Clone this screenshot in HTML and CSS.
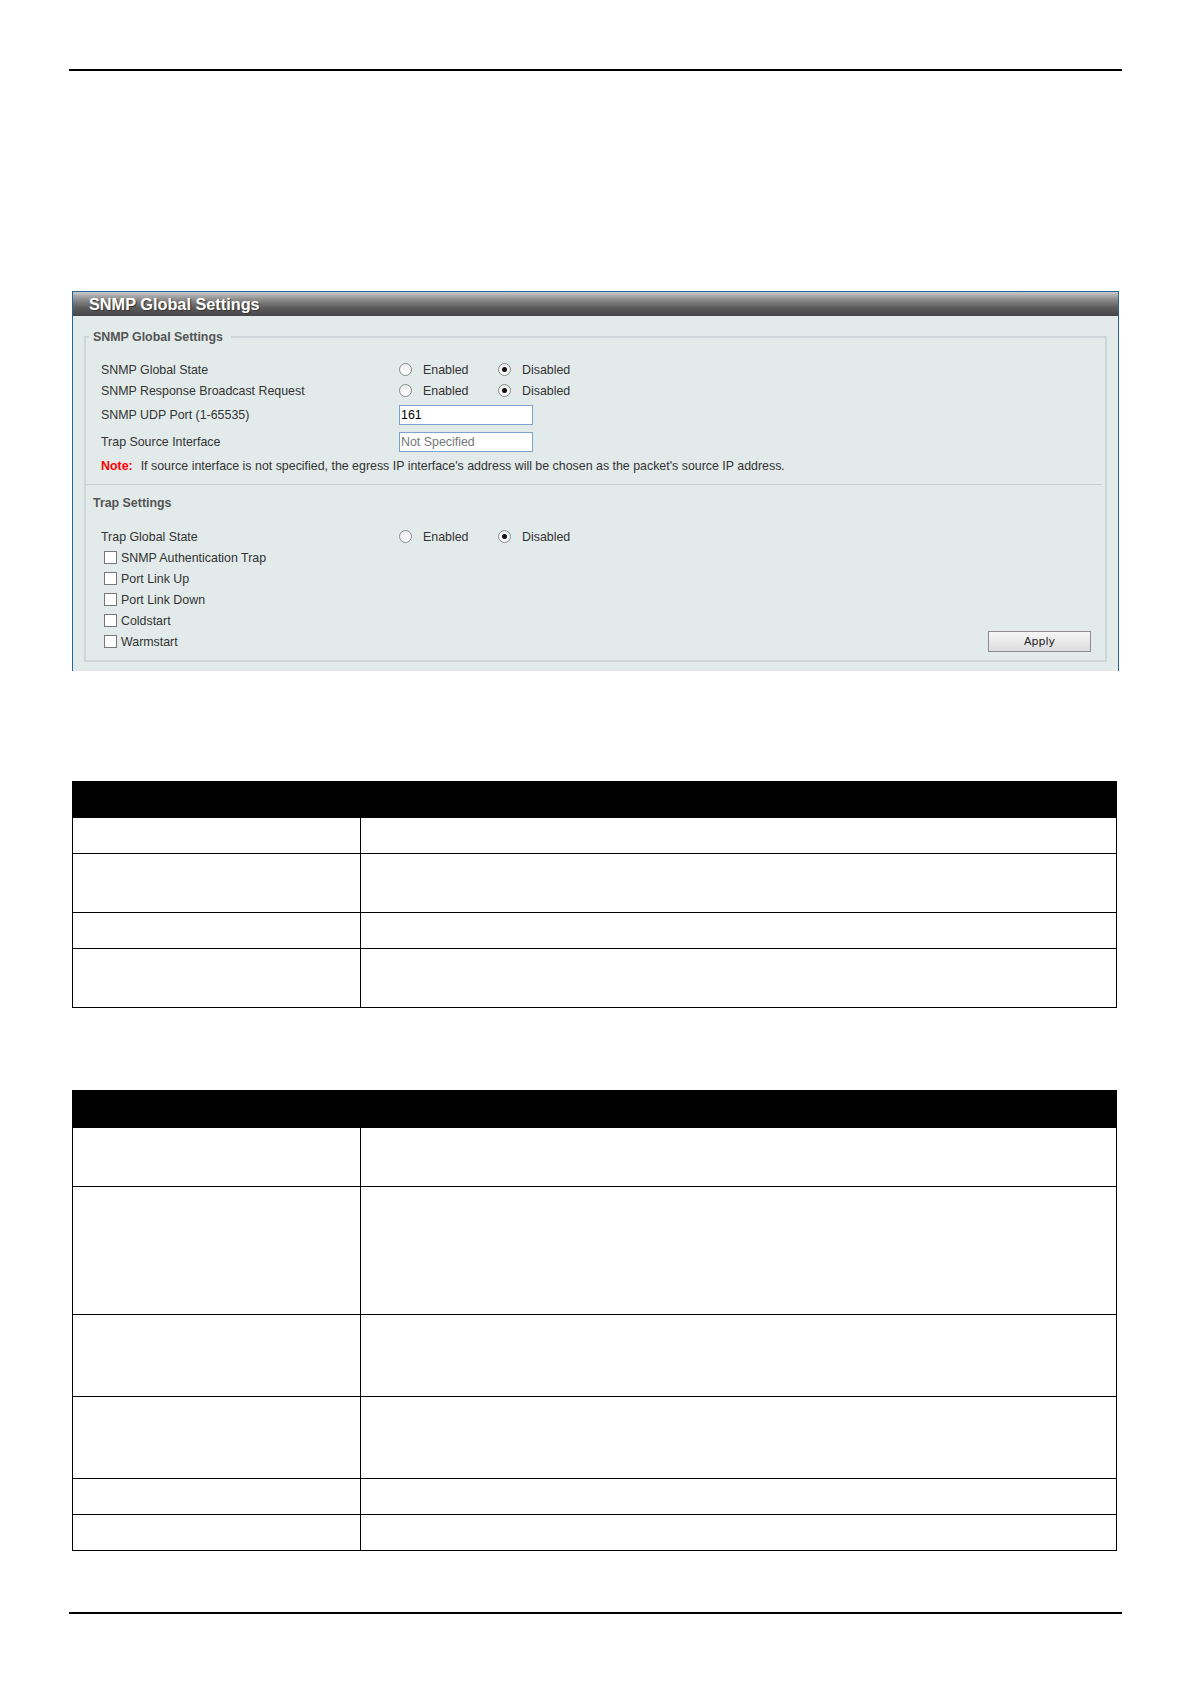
FILE: index.html
```html
<!DOCTYPE html>
<html lang="en">
<head>
    <meta charset="UTF-8">
    <meta name="viewport" content="width=device-width, initial-scale=1.0">
    <title>SNMP Global Settings</title>
    <link rel="stylesheet" href="styles.css">
</head>
<body>
    <div class="page">
        <div class="rule"></div>

        <div class="panel">
            <div class="panel-head">SNMP Global Settings</div>
            <div class="panel-body">
                <fieldset class="group">
                    <legend>SNMP Global Settings</legend>
                    <div class="fields">
                        <div class="row">
                            <span class="label">SNMP Global State</span>
                            <span class="opt"><span class="radio"></span>Enabled</span>
                            <span class="opt"><span class="radio on"></span>Disabled</span>
                        </div>
                        <div class="row">
                            <span class="label">SNMP Response Broadcast Request</span>
                            <span class="opt"><span class="radio"></span>Enabled</span>
                            <span class="opt"><span class="radio on"></span>Disabled</span>
                        </div>
                        <div class="row input-row">
                            <span class="label">SNMP UDP Port (1-65535)</span>
                            <input class="text-input" type="text" value="161">
                        </div>
                        <div class="row input-row">
                            <span class="label">Trap Source Interface</span>
                            <input class="text-input" type="text" placeholder="Not Specified">
                        </div>
                        <div class="row note">
                            <b>Note:</b>If source interface is not specified, the egress IP interface's address will be chosen as the packet's source IP address.
                        </div>

                        <div class="sep"></div>
                        <div class="sub-head">Trap Settings</div>

                        <div class="row trap-state">
                            <span class="label">Trap Global State</span>
                            <span class="opt"><span class="radio"></span>Enabled</span>
                            <span class="opt"><span class="radio on"></span>Disabled</span>
                        </div>
                        <div class="row check-row"><span class="box"></span>SNMP Authentication Trap</div>
                        <div class="row check-row"><span class="box"></span>Port Link Up</div>
                        <div class="row check-row"><span class="box"></span>Port Link Down</div>
                        <div class="row check-row"><span class="box"></span>Coldstart</div>
                        <div class="row check-row">
                            <span class="box"></span>Warmstart
                            <button class="apply" type="button">Apply</button>
                        </div>
                    </div>
                </fieldset>
            </div>
        </div>

        <table class="spec first">
            <colgroup><col class="c1"><col></colgroup>
            <tr class="head"><th></th><th></th></tr>
            <tr class="one"><td></td><td></td></tr>
            <tr class="two"><td></td><td></td></tr>
            <tr class="one"><td></td><td></td></tr>
            <tr class="two"><td></td><td></td></tr>
        </table>

        <table class="spec second">
            <colgroup><col class="c1"><col></colgroup>
            <tr class="head"><th></th><th></th></tr>
            <tr class="two"><td></td><td></td></tr>
            <tr class="five"><td></td><td></td></tr>
            <tr class="three"><td></td><td></td></tr>
            <tr class="three"><td></td><td></td></tr>
            <tr class="one"><td></td><td></td></tr>
            <tr class="one"><td></td><td></td></tr>
        </table>

        <div class="rule bottom"></div>
    </div>
</body>
</html>
```

FILE: styles.css
```css
body {
    margin: 0;
    font-family: "Liberation Sans", Arial, sans-serif;
    background: #fff;
}
.page {
    width: 1053px;
    margin-left: 69px;
    padding-top: 69px;
    padding-bottom: 60px;
}
.rule {
    height: 2px;
    background: #000;
}
.rule.bottom {
    margin-top: 61px;
}

/* settings window */
.panel {
    margin: 220px 3px 0 3px;
    border: 1px solid #25639a;
    border-bottom: none;
    background: #e2eaea;
}
.panel-head {
    height: 24px;
    line-height: 24px;
    padding-left: 16px;
    background: linear-gradient(to bottom, #c9c9c9 0%, #8e8e8e 30%, #5c5c5c 65%, #464646 100%);
    color: #fff;
    font-size: 16.3px;
    font-weight: bold;
    text-shadow: 1px 1px 1px #333;
}
.panel-body {
    padding: 14px 11px 9px 11px;
}
.group {
    margin: 0;
    padding: 0 0 8px 0;
    border: 2px solid #cdd6d9;
    min-width: 0;
}
.group legend {
    margin-left: 3px;
    padding: 0 8px 0 4px;
    font-size: 12.4px;
    line-height: 14px;
    font-weight: bold;
    color: #555;
}
.fields {
    padding-top: 15px;
}
.row {
    display: flex;
    align-items: center;
    height: 21px;
    padding-left: 15px;
    font-size: 12.4px;
    color: #333;
}
.row.input-row {
    height: 27px;
}
.label {
    width: 298px;
}
.opt {
    display: flex;
    align-items: center;
    width: 99px;
}
.radio {
    position: relative;
    width: 13px;
    height: 13px;
    box-sizing: border-box;
    margin-right: 11px;
    border: 1px solid #8a8a8a;
    border-radius: 50%;
    background: linear-gradient(to bottom, #ececec, #ffffff);
}
.radio.on::after {
    content: "";
    position: absolute;
    left: 3px;
    top: 3px;
    width: 5px;
    height: 5px;
    border-radius: 50%;
    background: #111;
}
.text-input {
    width: 134px;
    height: 20px;
    box-sizing: border-box;
    margin: 0;
    padding: 0 1px;
    border: 1px solid #7da2ce;
    background: #fff;
    font-family: "Liberation Sans", Arial, sans-serif;
    font-size: 12.4px;
    color: #000;
    outline: none;
}
.text-input::placeholder {
    color: #777;
}
.row.note {
    height: 21px;
    color: #333;
}
.note b {
    color: #f00;
    margin-right: 8px;
}
.sep {
    margin: 8px 3px 0 0;
    border-top: 1px solid #c6cfd2;
}
.sub-head {
    margin-top: 11px;
    padding-left: 7px;
    font-size: 12.4px;
    line-height: 14px;
    font-weight: bold;
    color: #555;
}
.row.trap-state {
    margin-top: 16px;
}
.row.check-row {
    padding-left: 18px;
}
.box {
    width: 13px;
    height: 13px;
    box-sizing: border-box;
    margin-right: 4px;
    border: 1px solid #777;
    background: #fff;
}
.apply {
    margin-left: auto;
    margin-right: 14px;
    width: 103px;
    height: 21px;
    padding: 0;
    border: 1px solid #8d8d8d;
    background: linear-gradient(to bottom, #f6f6f6, #dcdcdc);
    font-family: "DejaVu Sans", sans-serif;
    font-size: 11px;
    color: #222;
}

/* parameter tables */
.spec {
    width: 1045px;
    margin-left: 3px;
    border-collapse: collapse;
}
.spec.first {
    margin-top: 110px;
}
.spec.second {
    margin-top: 82px;
}
.spec .c1 {
    width: 288px;
}
.spec th,
.spec td {
    padding: 0;
    border: 1px solid #000;
}
.spec th {
    background: #000;
}
.spec .head { height: 36px; }
.spec.second .head { height: 37px; }
.spec .one { height: 36px; }
.spec .two { height: 59px; }
.spec .three { height: 82px; }
.spec .five { height: 128px; }
```
